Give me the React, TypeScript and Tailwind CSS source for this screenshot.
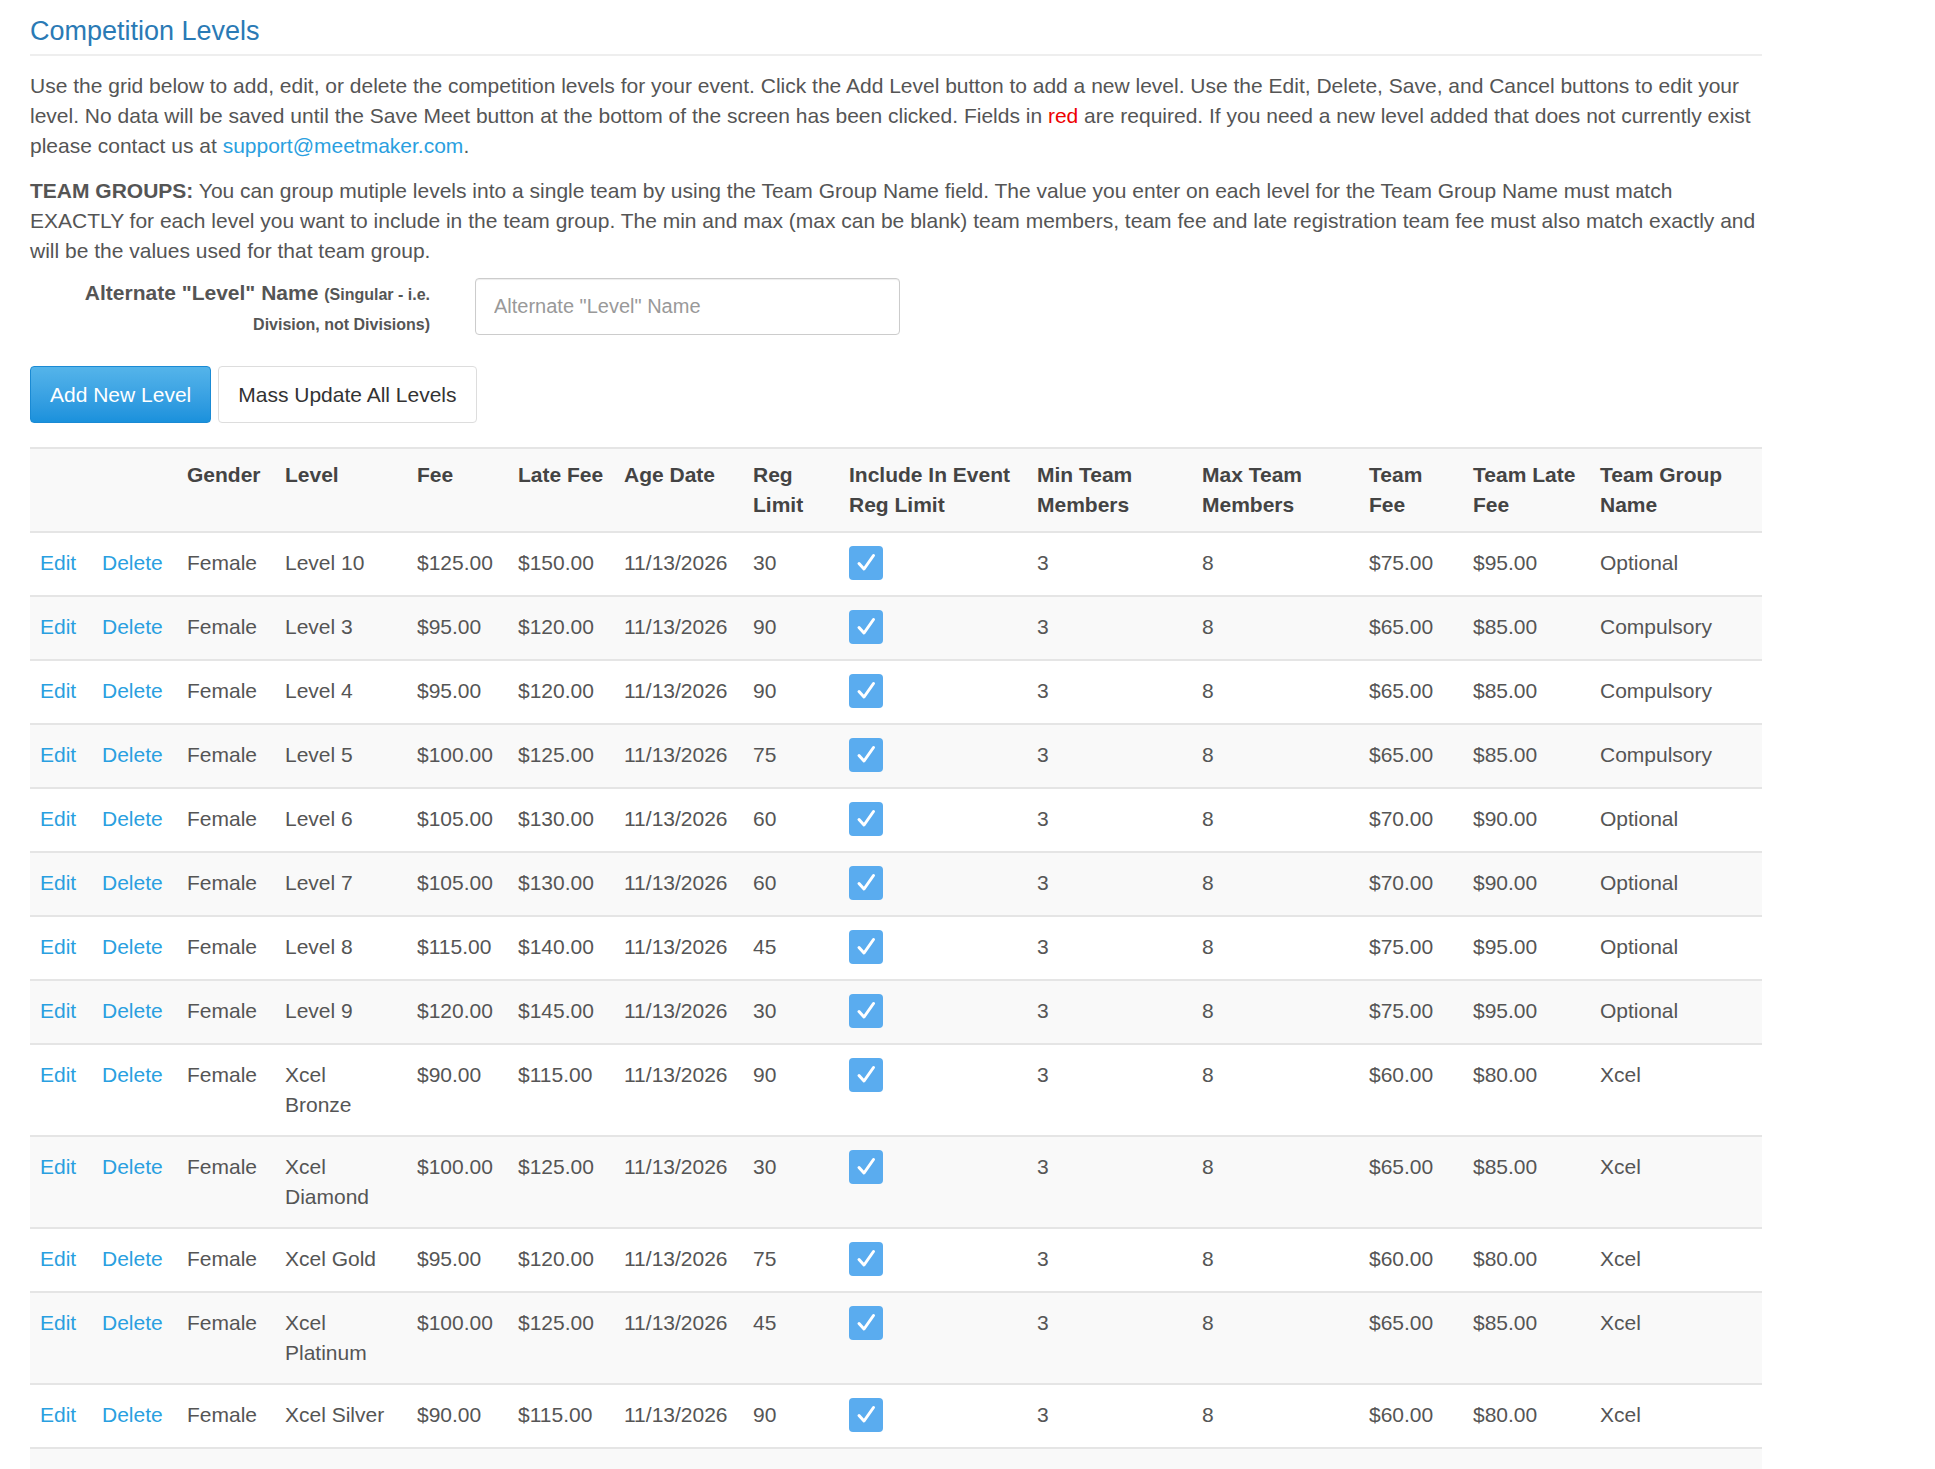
import React from "react";

const rows: string[][] = [
  ["Female", "Level 10", "$125.00", "$150.00", "11/13/2026", "30", "y", "3", "8", "$75.00", "$95.00", "Optional"],
  ["Female", "Level 3", "$95.00", "$120.00", "11/13/2026", "90", "y", "3", "8", "$65.00", "$85.00", "Compulsory"],
  ["Female", "Level 4", "$95.00", "$120.00", "11/13/2026", "90", "y", "3", "8", "$65.00", "$85.00", "Compulsory"],
  ["Female", "Level 5", "$100.00", "$125.00", "11/13/2026", "75", "y", "3", "8", "$65.00", "$85.00", "Compulsory"],
  ["Female", "Level 6", "$105.00", "$130.00", "11/13/2026", "60", "y", "3", "8", "$70.00", "$90.00", "Optional"],
  ["Female", "Level 7", "$105.00", "$130.00", "11/13/2026", "60", "y", "3", "8", "$70.00", "$90.00", "Optional"],
  ["Female", "Level 8", "$115.00", "$140.00", "11/13/2026", "45", "y", "3", "8", "$75.00", "$95.00", "Optional"],
  ["Female", "Level 9", "$120.00", "$145.00", "11/13/2026", "30", "y", "3", "8", "$75.00", "$95.00", "Optional"],
  ["Female", "Xcel Bronze", "$90.00", "$115.00", "11/13/2026", "90", "y", "3", "8", "$60.00", "$80.00", "Xcel"],
  ["Female", "Xcel Diamond", "$100.00", "$125.00", "11/13/2026", "30", "y", "3", "8", "$65.00", "$85.00", "Xcel"],
  ["Female", "Xcel Gold", "$95.00", "$120.00", "11/13/2026", "75", "y", "3", "8", "$60.00", "$80.00", "Xcel"],
  ["Female", "Xcel Platinum", "$100.00", "$125.00", "11/13/2026", "45", "y", "3", "8", "$65.00", "$85.00", "Xcel"],
  ["Female", "Xcel Silver", "$90.00", "$115.00", "11/13/2026", "90", "y", "3", "8", "$60.00", "$80.00", "Xcel"],
  ["N/A", "Coach", "$0.00", "", "", "", "", "", "", "", "", ""],
];

const widths = [62, 85, 98, 132, 101, 106, 129, 96, 188, 165, 167, 104, 127, 172];
const headers = ["", "", "Gender", "Level", "Fee", "Late Fee", "Age Date", "Reg Limit", "Include In Event Reg Limit", "Min Team Members", "Max Team Members", "Team Fee", "Team Late Fee", "Team Group Name"];

function Check() {
  return (
    <div className="w-[34px] h-[34px] rounded-[4px] bg-[#5aacef] flex items-center justify-center">
      <svg width="24" height="24" viewBox="0 0 24 24" fill="none">
        <path d="M5 12.5 L10 18 L19.5 4.5" stroke="white" strokeWidth="3" strokeLinecap="round" strokeLinejoin="round" />
      </svg>
    </div>
  );
}

export default function App() {
  return (
    <div className="bg-white text-[#555] text-[21px] leading-[30px] pl-[30px] pb-1" style={{ fontFamily: '"Liberation Sans", Arial, sans-serif' }}>
      <div className="w-[1732px]">
        <h2 className="text-[27px] leading-[34px] text-[#2a7ab5] pt-[14px] pb-[6px] border-b-2 border-[#eee]">Competition Levels</h2>
        <p className="mt-[15px]">
          Use the grid below to add, edit, or delete the competition levels for your event. Click the Add Level button to add a new level. Use the Edit, Delete, Save, and Cancel buttons to edit your level. No data will be saved until the Save Meet button at the bottom of the screen has been clicked. Fields in <span className="text-[#e00]">red</span> are required. If you need a new level added that does not currently exist please contact us at <span className="text-[#2a9fe0]">support@meetmaker.com</span>.
        </p>
        <p className="mt-[15px]">
          <b>TEAM GROUPS:</b> You can group mutiple levels into a single team by using the Team Group Name field. The value you enter on each level for the Team Group Name must match EXACTLY for each level you want to include in the team group. The min and max (max can be blank) team members, team fee and late registration team fee must also match exactly and will be the values used for that team group.
        </p>
        <div className="flex mt-[12px]">
          <div className="w-[400px] mr-[45px] text-right font-bold">
            Alternate "Level" Name <span className="text-[16px]">(Singular - i.e.</span>
            <div className="text-[16px] leading-[30px]">Division, not Divisions)</div>
          </div>
          <input placeholder={'Alternate "Level" Name'} className="w-[425px] h-[57px] border border-[#ccc] rounded-[4px] px-[18px] text-[20px] placeholder:text-[#999] shadow-[inset_0_1px_1px_rgba(0,0,0,0.075)]" />
        </div>
        <div className="flex gap-[7px] mt-[26px]">
          <button className="h-[57px] px-[19px] rounded-[4px] text-white bg-gradient-to-b from-[#54b4ea] to-[#1a91dc] border border-[#1a8ad4]">Add New Level</button>
          <button className="h-[57px] px-[19px] rounded-[4px] text-[#333] bg-white border border-[#ddd]">Mass Update All Levels</button>
        </div>
        <table className="mt-[24px] border-collapse table-fixed w-[1732px]">
          <colgroup>
            {widths.map((w, i) => <col key={i} style={{ width: w }} />)}
          </colgroup>
          <thead>
            <tr className="bg-[#f9f9f9] border-t-2 border-[#e5e5e5] border-b-2">
              {headers.map((h, i) => (
                <th key={i} className="text-left align-top font-bold px-[10px] pt-[11px] pb-[11px] leading-[30px] text-[#444]">{h}</th>
              ))}
            </tr>
          </thead>
          <tbody>
            {rows.map((r, ri) => (
              <tr key={ri} className={(ri % 2 === 1 ? "bg-[#f9f9f9]" : "bg-white") + " border-b-2 border-[#e5e5e5]"}>
                <td className="align-top px-[10px] py-[15px] text-[#2a9fe0]">Edit</td>
                <td className="align-top px-[10px] py-[15px] text-[#2a9fe0]">Delete</td>
                {r.map((c, ci) => (
                  <td key={ci} className="align-top px-[10px] py-[15px]">
                    {c === "y" ? <div className="-mt-[2px]"><Check /></div> : c}
                  </td>
                ))}
              </tr>
            ))}
          </tbody>
        </table>
      </div>
    </div>
  );
}
